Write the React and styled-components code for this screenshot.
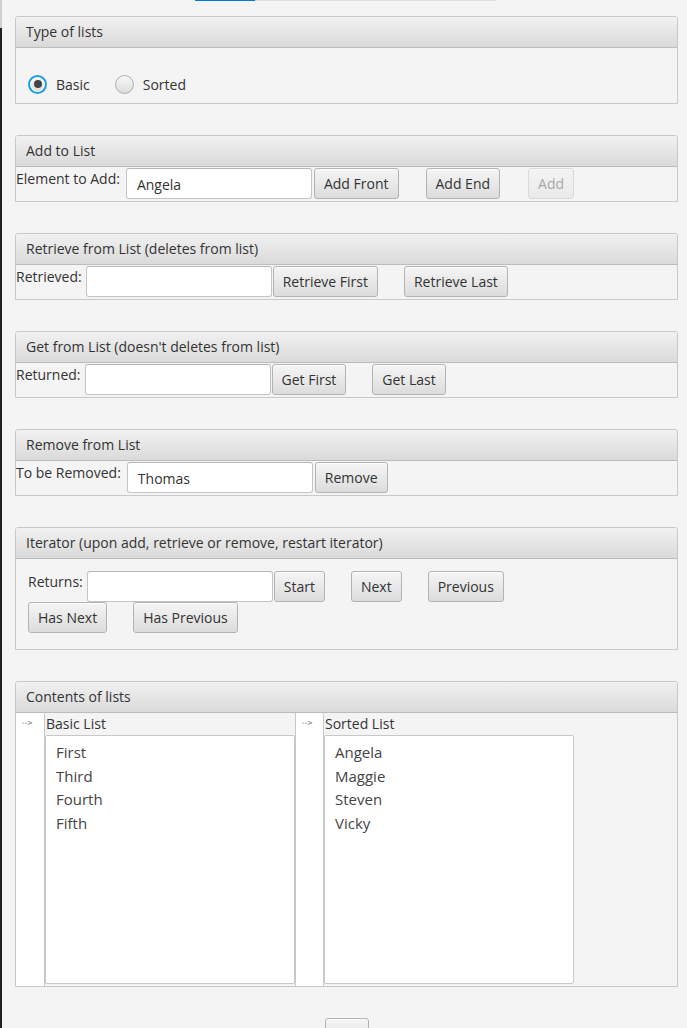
import React from "react";
import styled, { createGlobalStyle } from "styled-components";

const GlobalStyle = createGlobalStyle`
  html, body {
    margin: 0;
    padding: 0;
    background: #f4f4f4;
  }
  body {
    font-family: "Open Sans", "Noto Sans", sans-serif;
    font-size: 14px;
    color: #333;
    overflow: hidden;
  }
  * {
    box-sizing: border-box;
  }
`;

const Screen = styled.div`
  display: flex;
  min-height: 1028px;
  background: #f4f4f4;
`;

const WindowEdge = styled.div`
  width: 2px;
  flex-shrink: 0;
  display: flex;
  flex-direction: column;
  &::before {
    content: "";
    height: 28px;
    background: #cfcfcf;
  }
  &::after {
    content: "";
    flex: 1;
    background: #1f2023;
  }
`;

const Main = styled.div`
  flex: 1;
  padding: 0 9px 0 13px;
  display: flex;
  flex-direction: column;
`;

const TabStrip = styled.div`
  display: flex;
  height: 1px;
  margin: 0 0 15px 180px;
`;

const TabMark = styled.div`
  width: ${(p) => p.$w}px;
  background: ${(p) => (p.$active ? "#0078d7" : "#e0e0e0")};
`;

const Stack = styled.div`
  display: flex;
  flex-direction: column;
  gap: 31px;
`;

const Pane = styled.section`
  border: 1px solid #c8c8c8;
  border-radius: 3px 3px 0 0;
  background: #f4f4f4;
`;

const PaneHeader = styled.header`
  height: 31px;
  line-height: 30px;
  padding: 0 10px;
  border-bottom: 1px solid #bcbcbc;
  border-radius: 2px 2px 0 0;
  background: linear-gradient(#f1f1f1, #dadada);
  color: #333;
  white-space: nowrap;
`;

const PaneBody = styled.div`
  display: flex;
  flex-direction: column;
  padding: ${(p) => p.$pad || "1px 0 2px 0"};
  min-height: ${(p) => p.$h || 34}px;
`;

const Row = styled.div`
  display: flex;
  align-items: flex-start;
`;

const RadioRow = styled.div`
  display: flex;
  align-items: center;
  height: 18px;
`;

const RadioLabel = styled.label`
  display: flex;
  align-items: center;
  gap: 9px;
  margin-left: ${(p) => p.$gap || 0}px;
  color: #333;
`;

const RadioDot = styled.span`
  width: 19px;
  height: 19px;
  border-radius: 50%;
  display: grid;
  place-items: center;
  border: ${(p) => (p.$checked ? "2px solid #1f9fdc" : "1px solid #adadad")};
  background: linear-gradient(#f8f8f8, #dcdcdc);
  box-shadow: ${(p) => (p.$checked ? "inset 0 0 0 1px #ffffff" : "none")};
  &::after {
    content: "";
    width: 8px;
    height: 8px;
    border-radius: 50%;
    background: #444;
    display: ${(p) => (p.$checked ? "block" : "none")};
  }
`;

const FieldLabel = styled.span`
  line-height: 20px;
  padding-top: 1px;
  margin-right: ${(p) => p.$gap || 4}px;
  white-space: nowrap;
`;

const TextField = styled.div`
  width: 186px;
  height: 31px;
  padding: 0 10px;
  line-height: 31px;
  background: #fff;
  border: 1px solid #c4c4c4;
  border-top-color: #b6b6b6;
  border-radius: 3px;
  color: #333;
`;

const Button = styled.button`
  height: 31px;
  padding: 0 9px;
  margin-left: ${(p) => p.$gap || 0}px;
  font: inherit;
  color: #333;
  background: linear-gradient(#f5f5f5, #dcdcdc);
  border: 1px solid #b3b3b3;
  border-radius: 3px;
  box-shadow: inset 0 1px 0 rgba(255, 255, 255, 0.7);
  white-space: nowrap;
  &:disabled {
    opacity: 0.4;
  }
`;

const ListsArea = styled.div`
  display: flex;
  height: 273px;
`;

const ArrowCol = styled.div`
  width: ${(p) => p.$w}px;
  flex-shrink: 0;
  background: #fff;
  border-left: ${(p) => (p.$edge ? "1px solid #c8c8c8" : "none")};
  border-right: 1px solid #c8c8c8;
  border-radius: 0 2px 0 0;
  font-family: "DejaVu Sans", sans-serif;
  font-size: 7px;
  color: #666;
  padding: 6px 0 0 6px;
`;

const ListCol = styled.div`
  width: 250px;
  display: flex;
  flex-direction: column;
  padding-bottom: 2px;
`;

const ListTitle = styled.div`
  height: 22px;
  line-height: 22px;
  padding-left: 1px;
  color: #333;
`;

const ListBox = styled.ul`
  flex: 1;
  margin: 0;
  padding: 5px 0;
  list-style: none;
  background: #fff;
  border: 1px solid #c8c8c8;
  border-radius: 2px;
`;

const ListItem = styled.li`
  height: 23.7px;
  line-height: 23.7px;
  padding-left: 10px;
  font-size: 15px;
  color: #444;
`;

const Footer = styled.div`
  display: flex;
  justify-content: center;
  padding-top: 31px;
`;

function TitledPane({ title, children }) {
  return (
    <Pane>
      <PaneHeader>{title}</PaneHeader>
      {children}
    </Pane>
  );
}

export default function App() {
  const basic = ["First", "Third", "Fourth", "Fifth"];
  const sorted = ["Angela", "Maggie", "Steven", "Vicky"];
  return (
    <Screen>
      <GlobalStyle />
      <WindowEdge />
      <Main>
        <TabStrip>
          <TabMark $w={60} $active />
          <TabMark $w={241} />
        </TabStrip>
        <Stack>
          <TitledPane title="Type of lists">
            <PaneBody $pad="27px 12px 10px" $h={55}>
              <RadioRow>
                <RadioLabel>
                  <RadioDot $checked />
                  Basic
                </RadioLabel>
                <RadioLabel $gap={25}>
                  <RadioDot />
                  Sorted
                </RadioLabel>
              </RadioRow>
            </PaneBody>
          </TitledPane>

          <TitledPane title="Add to List">
            <PaneBody>
              <Row>
                <FieldLabel $gap={6}>Element to Add:</FieldLabel>
                <TextField>Angela</TextField>
                <Button $gap={2}>Add Front</Button>
                <Button $gap={27}>Add End</Button>
                <Button $gap={28} disabled>
                  Add
                </Button>
              </Row>
            </PaneBody>
          </TitledPane>

          <TitledPane title="Retrieve from List (deletes from list)">
            <PaneBody>
              <Row>
                <FieldLabel>Retrieved:</FieldLabel>
                <TextField />
                <Button $gap={1}>Retrieve First</Button>
                <Button $gap={26}>Retrieve Last</Button>
              </Row>
            </PaneBody>
          </TitledPane>

          <TitledPane title="Get from List (doesn't deletes from list)">
            <PaneBody>
              <Row>
                <FieldLabel>Returned:</FieldLabel>
                <TextField />
                <Button $gap={1}>Get First</Button>
                <Button $gap={26}>Get Last</Button>
              </Row>
            </PaneBody>
          </TitledPane>

          <TitledPane title="Remove from List">
            <PaneBody>
              <Row>
                <FieldLabel $gap={6}>To be Removed:</FieldLabel>
                <TextField>Thomas</TextField>
                <Button $gap={2}>Remove</Button>
              </Row>
            </PaneBody>
          </TitledPane>

          <TitledPane title="Iterator (upon add, retrieve or remove, restart iterator)">
            <PaneBody $pad="12px 12px 14px" $h={90}>
              <Row>
                <FieldLabel>Returns:</FieldLabel>
                <TextField />
                <Button $gap={1}>Start</Button>
                <Button $gap={26}>Next</Button>
                <Button $gap={26}>Previous</Button>
              </Row>
              <Row>
                <Button>Has Next</Button>
                <Button $gap={26}>Has Previous</Button>
              </Row>
            </PaneBody>
          </TitledPane>

          <TitledPane title="Contents of lists">
            <ListsArea>
              <ArrowCol $w={29}>--&gt;</ArrowCol>
              <ListCol>
                <ListTitle>Basic List</ListTitle>
                <ListBox>
                  {basic.map((item) => (
                    <ListItem key={item}>{item}</ListItem>
                  ))}
                </ListBox>
              </ListCol>
              <ArrowCol $w={29} $edge>
                --&gt;
              </ArrowCol>
              <ListCol>
                <ListTitle>Sorted List</ListTitle>
                <ListBox>
                  {sorted.map((item) => (
                    <ListItem key={item}>{item}</ListItem>
                  ))}
                </ListBox>
              </ListCol>
            </ListsArea>
          </TitledPane>
        </Stack>
        <Footer>
          <Button style={{ width: 44 }} />
        </Footer>
      </Main>
    </Screen>
  );
}
